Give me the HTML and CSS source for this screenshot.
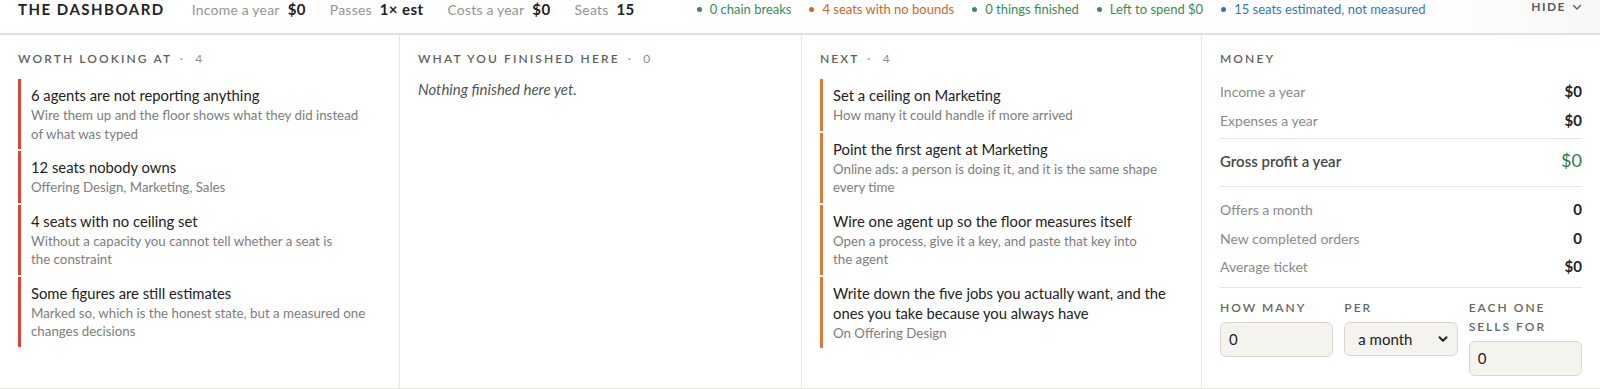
FILE: index.html
```html
<!DOCTYPE html>
<html lang="en">
<head>
  <meta charset="UTF-8" />
  <meta name="viewport" content="width=device-width, initial-scale=1.0"/>
  <title>The Dashboard</title>
  <link rel="stylesheet" href="styles.css">
</head>
<body>

  <header class="topbar">
    <h1 class="brand">THE DASHBOARD</h1>

    <div class="stats">
      <div class="stat"><span class="stat-label">Income a year</span><span class="stat-value">$0</span></div>
      <div class="stat"><span class="stat-label">Passes</span><span class="stat-value">1× est</span></div>
      <div class="stat"><span class="stat-label">Costs a year</span><span class="stat-value">$0</span></div>
      <div class="stat"><span class="stat-label">Seats</span><span class="stat-value">15</span></div>
    </div>

    <ul class="signals">
      <li class="signal signal--good">0 chain breaks</li>
      <li class="signal signal--warn">4 seats with no bounds</li>
      <li class="signal signal--good">0 things finished</li>
      <li class="signal signal--good">Left to spend $0</li>
      <li class="signal signal--info">15 seats estimated, not measured</li>
    </ul>

    <button class="hide-button">
      HIDE
      <svg width="12" height="12" viewBox="0 0 12 12" aria-hidden="true">
        <path d="M2.5 4.5 L6 8 L9.5 4.5" fill="none" stroke="currentColor" stroke-width="1.4" stroke-linecap="round" stroke-linejoin="round"/>
      </svg>
    </button>
  </header>

  <main class="board">

    <section class="column">
      <h2 class="column-title">Worth looking at <span class="count">· 4</span></h2>
      <ul class="cards">
        <li class="card card--alert">
          <h3>6 agents are not reporting anything</h3>
          <p>Wire them up and the floor shows what they did instead of what was typed</p>
        </li>
        <li class="card card--alert">
          <h3>12 seats nobody owns</h3>
          <p>Offering Design, Marketing, Sales</p>
        </li>
        <li class="card card--alert">
          <h3>4 seats with no ceiling set</h3>
          <p>Without a capacity you cannot tell whether a seat is the constraint</p>
        </li>
        <li class="card card--alert">
          <h3>Some figures are still estimates</h3>
          <p>Marked so, which is the honest state, but a measured one changes decisions</p>
        </li>
      </ul>
    </section>

    <section class="column">
      <h2 class="column-title">What you finished here <span class="count">· 0</span></h2>
      <p class="empty">Nothing finished here yet.</p>
    </section>

    <section class="column">
      <h2 class="column-title">Next <span class="count">· 4</span></h2>
      <ul class="cards">
        <li class="card card--next">
          <h3>Set a ceiling on Marketing</h3>
          <p>How many it could handle if more arrived</p>
        </li>
        <li class="card card--next">
          <h3>Point the first agent at Marketing</h3>
          <p>Online ads: a person is doing it, and it is the same shape every time</p>
        </li>
        <li class="card card--next">
          <h3>Wire one agent up so the floor measures itself</h3>
          <p>Open a process, give it a key, and paste that key into the agent</p>
        </li>
        <li class="card card--next">
          <h3>Write down the five jobs you actually want, and the ones you take because you always have</h3>
          <p>On Offering Design</p>
        </li>
      </ul>
    </section>

    <section class="column">
      <h2 class="column-title">Money</h2>

      <div class="money-group money-group--top">
        <div class="money-row"><span>Income a year</span><b>$0</b></div>
        <div class="money-row"><span>Expenses a year</span><b>$0</b></div>
      </div>

      <div class="money-group money-group--profit">
        <div class="money-row money-row--profit"><span>Gross profit a year</span><b>$0</b></div>
      </div>

      <div class="money-group money-group--orders">
        <div class="money-row"><span>Offers a month</span><b>0</b></div>
        <div class="money-row"><span>New completed orders</span><b>0</b></div>
        <div class="money-row"><span>Average ticket</span><b>$0</b></div>
      </div>

      <div class="money-form">
        <label class="field">
          <span class="field-label">How many</span>
          <input class="field-input" type="text" value="0">
        </label>
        <label class="field">
          <span class="field-label">Per</span>
          <span class="select-wrap">
            <select class="field-input field-select">
              <option>a month</option>
              <option>a week</option>
              <option>a year</option>
            </select>
            <svg class="select-arrow" width="12" height="12" viewBox="0 0 12 12" aria-hidden="true">
              <path d="M2.5 4.2 L6 7.7 L9.5 4.2" fill="none" stroke="currentColor" stroke-width="2" stroke-linecap="round" stroke-linejoin="round"/>
            </svg>
          </span>
        </label>
        <label class="field">
          <span class="field-label">Each one sells for</span>
          <input class="field-input" type="text" value="0">
        </label>
      </div>
    </section>

  </main>

</body>
</html>
```

FILE: styles.css
```css
* {
  box-sizing: border-box;
}

html, body {
  margin: 0;
  padding: 0;
  background-color: #fff;
  font-family: 'Lato', 'Liberation Sans', sans-serif;
  color: #222;
  overflow: hidden;
}

ul {
  list-style: none;
  margin: 0;
  padding: 0;
}

/* top bar */

.topbar {
  position: relative;
  height: 35px;
  display: flex;
  align-items: flex-start;
  padding: 0 17px 0 18px;
  border-bottom: 2px solid #e4e0d7;
  line-height: 18px;
  white-space: nowrap;
}

.topbar::after {
  content: "";
  position: absolute;
  top: 0;
  right: 0;
  width: 180px;
  height: 33px;
  background: linear-gradient(to right, rgba(246, 246, 244, 0), rgba(246, 246, 244, 0.9));
  pointer-events: none;
}

.brand {
  margin: 0;
  font-size: 15px;
  font-weight: 700;
  letter-spacing: 1.5px;
  color: #222;
  line-height: 18px;
}

.stats {
  display: flex;
  gap: 24px;
  margin-left: 27px;
}

.stat {
  display: flex;
  align-items: baseline;
  gap: 8px;
}

.stat-label {
  font-size: 14px;
  letter-spacing: 0.2px;
  color: #949494;
}

.stat-value {
  font-size: 15px;
  font-weight: 700;
  color: #222;
  letter-spacing: 0.4px;
}

.signals {
  display: flex;
  gap: 18px;
  margin-left: 62px;
  font-size: 13px;
}

.signal::before {
  content: "";
  display: inline-block;
  width: 5px;
  height: 5px;
  border-radius: 50%;
  background-color: currentColor;
  margin-right: 8px;
  vertical-align: 2px;
}

.signal--good {
  color: #3c8a58;
}

.signal--warn {
  color: #c8682a;
}

.signal--info {
  color: #3677b3;
}

.hide-button {
  position: relative;
  z-index: 1;
  margin-left: auto;
  display: flex;
  align-items: center;
  gap: 5px;
  background: none;
  border: none;
  padding: 0;
  font-family: inherit;
  font-size: 12px;
  font-weight: 700;
  letter-spacing: 1.5px;
  color: #5c5c5c;
  line-height: 14px;
  cursor: pointer;
}

/* board */

.board {
  height: 354px;
  display: grid;
  grid-template-columns: 400px 402px 400px 1fr;
  border-bottom: 1px solid #ebe8e2;
}

.column {
  padding: 16px 18px 0 18px;
  border-right: 1px solid #ebe8e2;
}

.column:last-child {
  border-right: none;
}

.column-title {
  margin: 0 0 12px;
  font-size: 12px;
  font-weight: 600;
  line-height: 16px;
  letter-spacing: 2.1px;
  text-transform: uppercase;
  color: #5f5f5f;
}

.count {
  margin-left: 3px;
  font-weight: 400;
  word-spacing: 5px;
  color: #8c8c8c;
}

.cards {
  display: flex;
  flex-direction: column;
  gap: 2px;
}

.card {
  padding: 6px 12px 6px 10px;
  border-left: 3px solid #d8473b;
}

.card--next {
  border-left-color: #e07a33;
}

.card h3 {
  margin: 0;
  font-size: 14.8px;
  font-weight: 400;
  line-height: 20px;
  color: #222;
}

.card p {
  margin: 1px 0 0;
  font-size: 13.3px;
  line-height: 18.5px;
  color: #7d7d7d;
  text-wrap: pretty;
}

.empty {
  margin: 0;
  font-size: 15px;
  font-style: italic;
  line-height: 20px;
  color: #555;
}

/* money */

.money-group {
  border-bottom: 1px solid #e8e5de;
}

.money-group--top {
  padding: 0 0 3px;
  margin-top: -2px;
}

.money-group--profit {
  padding: 7px 0 11px;
}

.money-group--orders {
  padding: 8px 0 6px;
}

.money-row {
  display: flex;
  justify-content: space-between;
  align-items: baseline;
  height: 29px;
  line-height: 29px;
  font-size: 14px;
  color: #8a8a8a;
}

.money-row b {
  font-size: 15px;
  font-weight: 700;
  color: #222;
}

.money-group--orders .money-row {
  height: 28.5px;
  line-height: 28.5px;
}

.money-row--profit {
  font-size: 15px;
  font-weight: 600;
  color: #474747;
}

.money-row--profit b {
  font-size: 18px;
  font-weight: 400;
  color: #2e7b4e;
}

.money-form {
  display: grid;
  grid-template-columns: repeat(3, 1fr);
  gap: 11px;
  padding-top: 10px;
  align-items: start;
}

.field {
  display: flex;
  flex-direction: column;
  gap: 5px;
}

.field-label {
  font-size: 12px;
  font-weight: 600;
  line-height: 19px;
  letter-spacing: 2px;
  text-transform: uppercase;
  color: #666;
}

.field-input {
  width: 100%;
  height: 35px;
  padding: 0 8px;
  border: 1px solid #dcd7cd;
  border-radius: 6px;
  background-color: #f5f3ee;
  font-family: inherit;
  font-size: 15px;
  color: #222;
  outline: none;
}

.select-wrap {
  position: relative;
  display: block;
}

.field-select {
  appearance: none;
  -webkit-appearance: none;
  height: 34px;
  padding-left: 13px;
}

.select-arrow {
  position: absolute;
  right: 9px;
  top: 11px;
  color: #222;
  pointer-events: none;
}
```
